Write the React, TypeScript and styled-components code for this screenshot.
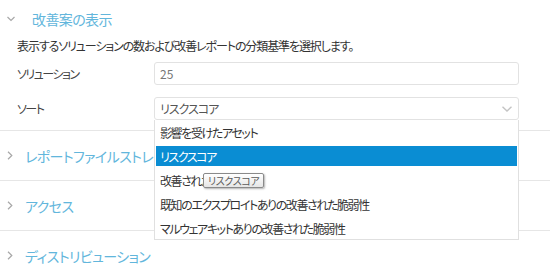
import React from 'react';
import styled, { createGlobalStyle } from 'styled-components';

const GlobalStyle = createGlobalStyle`
  body {
    margin: 0;
    background: #ffffff;
    font-family: "Noto Sans CJK JP", "Liberation Sans", sans-serif;
    font-feature-settings: "palt";
    color: #333333;
  }
`;

const Page = styled.div`
  width: 550px;
  height: 276px;
  overflow: hidden;
  display: flex;
  flex-direction: column;
`;

const Section = styled.section`
  border-bottom: 1px solid #e6e6e6;
  flex-shrink: 0;
`;

const SectionHeader = styled.div<{ $height: number }>`
  height: ${({ $height }) => $height}px;
  display: flex;
  align-items: center;
  padding-left: 7px;
  cursor: pointer;
`;

const ChevronBox = styled.span<{ $gap: number }>`
  display: flex;
  align-items: center;
  width: 8px;
  margin-right: ${({ $gap }) => $gap}px;
`;

const SectionTitle = styled.span`
  font-size: 14px;
  line-height: 18px;
  letter-spacing: -0.6px;
  color: #62b6dc;
`;

const SectionBody = styled.div`
  padding: 0 31px 10px 17px;
`;

const Description = styled.p`
  margin: 0 0 8px;
  font-size: 12px;
  line-height: 16px;
  letter-spacing: -1.1px;
  color: #333333;
`;

const Form = styled.div`
  display: flex;
  flex-direction: column;
  gap: 12px;
`;

const FormRow = styled.div`
  display: grid;
  grid-template-columns: 137px 1fr;
  align-items: center;
`;

const Label = styled.label`
  font-size: 12px;
  letter-spacing: -1.5px;
  color: #444444;
`;

const Field = styled.div`
  position: relative;
  height: 23px;
  box-sizing: border-box;
  border: 1px solid #e2e2e2;
  border-radius: 3px;
  display: flex;
  align-items: center;
  justify-content: space-between;
  padding: 0 6px 0 5px;
  font-size: 12px;
  color: #777777;
`;

const SelectValue = styled.span`
  letter-spacing: -1px;
  color: #555555;
`;

const DropList = styled.ul`
  position: absolute;
  top: 100%;
  left: -1px;
  right: -1px;
  margin: 1px 0 0;
  padding: 2px 1px 0;
  list-style: none;
  background: #ffffff;
  border: 1px solid #e0e0e0;
  border-top: none;
  display: flex;
  flex-direction: column;
  gap: 4px;
  box-sizing: border-box;
  height: 120px;
  z-index: 5;
`;

const DropItem = styled.li<{ $active?: boolean }>`
  position: relative;
  height: 20px;
  padding-left: 4px;
  display: flex;
  align-items: center;
  font-size: 12px;
  letter-spacing: -1.4px;
  color: ${({ $active }) => ($active ? '#ffffff' : '#333333')};
  background: ${({ $active }) => ($active ? '#0a8dd3' : 'transparent')};
`;

const Tooltip = styled.span`
  position: absolute;
  left: 47px;
  top: 3px;
  height: 13px;
  padding: 0 4px;
  display: flex;
  align-items: center;
  font-size: 10px;
  letter-spacing: -0.4px;
  color: #5a5a5a;
  background: linear-gradient(#ffffff, #e6e6e6);
  border: 1px solid #8a8a8a;
  border-radius: 2px;
  box-shadow: 1px 1px 2px rgba(0, 0, 0, 0.3);
  white-space: nowrap;
`;

const ChevronDown = () => (
  <svg width="8" height="6" viewBox="0 0 8 6">
    <polyline points="0.5,1 4,4.5 7.5,1" fill="none" stroke="#a8a8a8" strokeWidth="1.2" />
  </svg>
);

const ChevronRight = () => (
  <svg width="6" height="9" viewBox="0 0 6 9">
    <polyline points="1,0.8 4.8,4.5 1,8.2" fill="none" stroke="#a8a8a8" strokeWidth="1.2" />
  </svg>
);

const SelectArrow = () => (
  <svg width="10" height="6" viewBox="0 0 10 6">
    <polyline points="0.5,0.8 5,5 9.5,0.8" fill="none" stroke="#c4c4c4" strokeWidth="1.4" />
  </svg>
);

const sortOptions = [
  '影響を受けたアセット',
  'リスクスコア',
  '改善された脆弱性',
  '既知のエクスプロイトありの改善された脆弱性',
  'マルウェアキットありの改善された脆弱性',
];

const collapsed = ['レポートファイルストレージ', 'アクセス', 'ディストリビューション'];

const App = () => {
  const selected = 'リスクスコア';

  return (
    <>
      <GlobalStyle />
      <Page>
        <Section>
          <SectionHeader $height={38}>
            <ChevronBox $gap={17}>
              <ChevronDown />
            </ChevronBox>
            <SectionTitle>改善案の表示</SectionTitle>
          </SectionHeader>
          <SectionBody>
            <Description>表示するソリューションの数および改善レポートの分類基準を選択します。</Description>
            <Form>
              <FormRow>
                <Label>ソリューション</Label>
                <Field>25</Field>
              </FormRow>
              <FormRow>
                <Label>ソート</Label>
                <Field>
                  <SelectValue>{selected}</SelectValue>
                  <SelectArrow />
                  <DropList>
                    {sortOptions.map((opt, i) => (
                      <DropItem key={opt} $active={opt === selected}>
                        {opt}
                        {i === 2 && <Tooltip>リスクスコア</Tooltip>}
                      </DropItem>
                    ))}
                  </DropList>
                </Field>
              </FormRow>
            </Form>
          </SectionBody>
        </Section>
        {collapsed.map((title) => (
          <Section key={title}>
            <SectionHeader $height={49}>
              <ChevronBox $gap={10}>
                <ChevronRight />
              </ChevronBox>
              <SectionTitle>{title}</SectionTitle>
            </SectionHeader>
          </Section>
        ))}
      </Page>
    </>
  );
};

export default App;
